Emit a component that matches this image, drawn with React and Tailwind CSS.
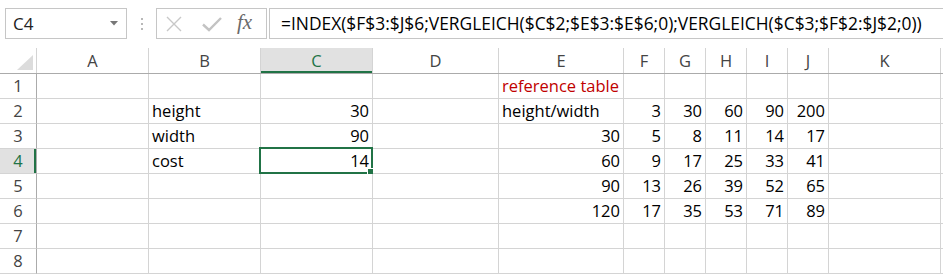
import React from "react";

const cols = ["A", "B", "C", "D", "E", "F", "G", "H", "I", "J", "K"];

// each row: 11 cells (A..K); numbers are right aligned like in Excel
const rows = [
  ["", "", "", "", { t: "reference table", red: true }, "", "", "", "", "", ""],
  ["", "height", 30, "", "height/width", 3, 30, 60, 90, 200, ""],
  ["", "width", 90, "", 30, 5, 8, 11, 14, 17, ""],
  ["", "cost", 14, "", 60, 9, 17, 25, 33, 41, ""],
  ["", "", "", "", 90, 13, 26, 39, 52, 65, ""],
  ["", "", "", "", 120, 17, 35, 53, 71, 89, ""],
  ["", "", "", "", "", "", "", "", "", "", ""],
  ["", "", "", "", "", "", "", "", "", "", ""],
];

const gridCols =
  "grid grid-cols-[37px_112px_112px_112px_126px_125px_41px_41px_41px_41px_41px_112px_1fr]";

function Cell({ value, selected }) {
  const isNum = typeof value === "number";
  const isObj = value && typeof value === "object";
  const text = isObj ? value.t : value;
  return (
    <div
      className={
        "relative h-[25px] border-r border-b border-[#d4d4d4] leading-[24px] whitespace-nowrap " +
        (isNum ? "text-right pr-[3px]" : "text-left pl-[3px]") +
        (isObj && value.red ? " text-[#c00000]" : " text-black")
      }
    >
      {text}
      {selected && (
        <div className="absolute -top-[2px] -left-[2px] -right-[1px] -bottom-[1px] border-2 border-[#217346]">
          <div className="absolute -right-[3px] -bottom-[3px] w-[5px] h-[5px] bg-[#217346] border border-white box-content" />
        </div>
      )}
    </div>
  );
}

export default function App() {
  return (
    <div
      className="w-[943px] h-[274px] bg-white overflow-hidden text-[16.5px]"
      style={{ fontFamily: '"Open Sans", "Noto Sans", sans-serif' }}
    >
      {/* formula bar */}
      <div className="flex items-stretch pt-[8px] h-[39px]">
        <div className="ml-[5px] w-[122px] border border-[#c6c6c6] flex items-center justify-between pl-[7px] pr-[8px] text-[#222] text-[17px]">
          <span>C4</span>
          <svg width="8" height="5" viewBox="0 0 8 5">
            <path d="M0 0 L8 0 L4 4.5 Z" fill="#777" />
          </svg>
        </div>
        <div className="w-[29px] flex flex-col items-center justify-center gap-[3px]">
          <div className="w-[2px] h-[2px] bg-[#b8b8b8]" />
          <div className="w-[2px] h-[2px] bg-[#b8b8b8]" />
          <div className="w-[2px] h-[2px] bg-[#b8b8b8]" />
        </div>
        <div className="w-[111px] border border-[#c6c6c6] flex items-center pl-[9px]">
          <svg width="16" height="16" viewBox="0 0 16 16">
            <path d="M1 1 L15 15 M15 1 L1 15" stroke="#c8c8c8" strokeWidth="1.4" />
          </svg>
          <svg className="ml-[20px]" width="20" height="16" viewBox="0 0 20 16">
            <path d="M1 8.5 L7 14 L19 2" stroke="#c3c3c3" strokeWidth="2.4" fill="none" />
          </svg>
          <span
            className="ml-[15px] italic text-[21px] leading-none text-[#6a6a6a] -mt-[2px]"
            style={{ fontFamily: '"Liberation Serif", serif' }}
          >
            fx
          </span>
        </div>
        <div className="ml-[2px] flex-1 border-t border-b border-l border-[#c6c6c6] flex items-center pl-[11px] text-black whitespace-nowrap text-[17.4px]">
          =INDEX($F$3:$J$6;VERGLEICH($C$2;$E$3:$E$6;0);VERGLEICH($C$3;$F$2:$J$2;0))
        </div>
      </div>

      {/* sheet */}
      <div className="mt-[9px]">
        {/* column headers */}
        <div className={gridCols + " h-[26px] border-b border-[#ababab]"}>
          <div className="relative border-r border-[#d4d4d4]">
            <svg className="absolute left-[17px] top-[7px]" width="16" height="15" viewBox="0 0 16 15">
              <path d="M16 0 L16 15 L0 15 Z" fill="#dcdcdc" />
            </svg>
          </div>
          {cols.map((c) => (
            <div
              key={c}
              className={
                "flex items-center justify-center leading-[25px] border-r border-[#d4d4d4] " +
                (c === "C"
                  ? "bg-[#e1e1e1] text-[#217346] shadow-[inset_0_-2px_0_#217346]"
                  : "text-[#444]")
              }
            >
              {c}
            </div>
          ))}
          <div />
        </div>

        {/* rows */}
        {rows.map((r, i) => (
          <div key={i} className={gridCols}>
            <div
              className={
                "h-[25px] flex items-center justify-center leading-[24px] border-b border-r border-b-[#d4d4d4] border-r-[#ababab] " +
                (i === 3
                  ? "bg-[#e1e1e1] text-[#217346] shadow-[inset_-2px_0_0_#217346]"
                  : "text-[#444]")
              }
            >
              {i + 1}
            </div>
            {r.map((v, j) => (
              <Cell key={j} value={v} selected={i === 3 && j === 2} />
            ))}
            <div className="h-[25px] border-b border-[#d4d4d4]" />
          </div>
        ))}
      </div>
    </div>
  );
}
